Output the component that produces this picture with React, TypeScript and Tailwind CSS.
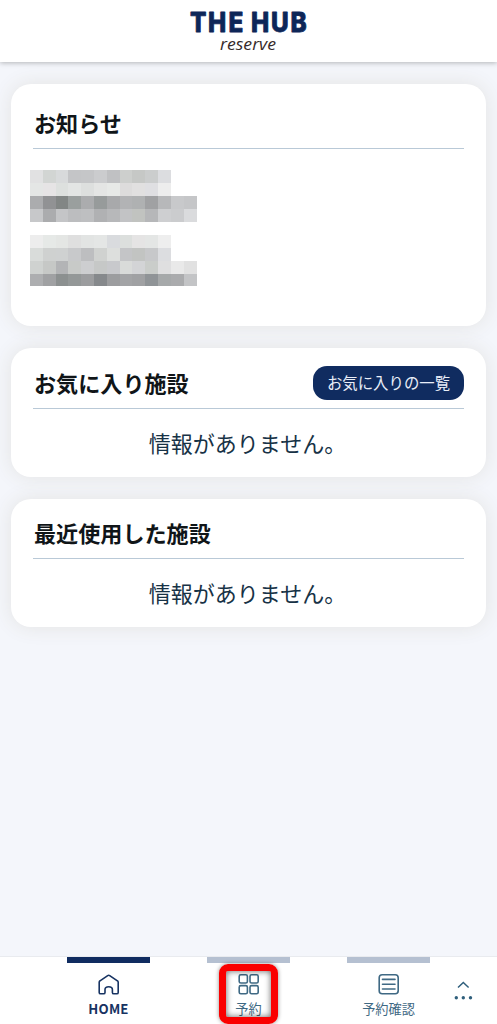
import type { ReactNode } from "react";
import clsx from "clsx";

const notices = [
  [
    ["#e1e1e2", "#d2d5d3", "#d8dadb", "#c4c5c7", "#c5c6c8", "#cbccce", "#c0c1c3", "#cdcfcd", "#c6c8c6", "#cbcdcd", "#dcdde0"],
    ["#e4e6e5", "#e6e4e5", "#dde0de", "#e3e5e4", "#dddfde", "#e4e5e4", "#e7e9e7", "#dddcdc", "#e1e0e0", "#dfdfe2", "#ededed"],
    ["#abacae", "#919294", "#828685", "#9a9f9e", "#abacae", "#979b9b", "#a8a9ab", "#b2b3b5", "#afb1b2", "#a0a1a3", "#b7b8ba", "#c8c9cb", "#c5c6c8"],
    ["#c7c8ca", "#abacae", "#c4c5c7", "#bcbdbf", "#bebfc1", "#b0b1b3", "#b7b8ba", "#c2c3c5", "#c1c3c0", "#b6b7b9", "#cecfd1", "#cbccce", "#dadbdd"],
  ],
  [
    ["#ededed", "#e6e9e7", "#e4e6e4", "#dfdfdf", "#e2e4e3", "#e4e6e5", "#d9dbde", "#dcdfdd", "#e5e4e4", "#e4e6e5", "#eeeeee"],
    ["#d9dcda", "#cfd1d0", "#cfd1d1", "#c8c9cb", "#bdbec0", "#d0d2d0", "#dddfdd", "#c4c5c7", "#c2c4c2", "#c7c8ca", "#dcdde0"],
    ["#cfd2d0", "#c6c8c6", "#b3b4b6", "#c8cac8", "#cdced0", "#c6c8c7", "#c8c9cc", "#d9dbd9", "#d3d4d6", "#cacdca", "#dfdfe0", "#e9e9e9", "#e1e1e1"],
    ["#adaeb0", "#a0a1a3", "#8c9090", "#949898", "#9c9d9f", "#86898c", "#9c9d9f", "#a3a4a6", "#a0a1a3", "#909497", "#a6a9aa", "#aaabad", "#c3c4c6"],
  ],
];

function Notice({ rows }: { rows: string[][] }) {
  return (
    <svg width="166.5" height="51.5" viewBox="0 0 13 4" preserveAspectRatio="none" shapeRendering="crispEdges">
      {rows.map((row, y) =>
        row.map((color, x) => <rect key={`${x}-${y}`} x={x} y={y} width="1" height="1" fill={color} />)
      )}
    </svg>
  );
}

function Card({ title, action, className, children }: { title: string; action?: ReactNode; className?: string; children: ReactNode }) {
  return (
    <section className={clsx("rounded-[20px] bg-white px-[22px] shadow-[0_0_20px_#e3e3e2]", className)}>
      <div className="flex h-[60px] items-end justify-between border-b border-[#b9c9d7] pb-2">
        <h2 className="pb-[2px] pl-px text-[22.1px] leading-8 font-bold text-[#101518]">{title}</h2>
        {action}
      </div>
      {children}
    </section>
  );
}

function Empty() {
  return <p className="pt-[17px] pr-[2px] text-center text-[22px] leading-8 text-[#173246]">情報がありません。</p>;
}

function HomeIcon() {
  return (
    <svg width="22" height="22" viewBox="0 0 22 22" fill="none" stroke="currentColor" strokeWidth="1.6" strokeLinejoin="round">
      <path d="M1.2 8.3Q1.2 7.3 2 6.8L9.7 1.6Q10.7 .9 11.7 1.6L19.4 6.8Q20.2 7.3 20.2 8.3V18.4Q20.2 19.8 18.8 19.8H15.8Q14.4 19.8 14.4 18.4V15.6Q14.4 12.8 10.7 12.8T7 15.6V18.4Q7 19.8 5.6 19.8H2.6Q1.2 19.8 1.2 18.4Z" />
    </svg>
  );
}

function GridIcon() {
  return (
    <svg width="22" height="22" viewBox="0 0 22 22" fill="none" stroke="currentColor" strokeWidth="1.6">
      <rect x="1.2" y="0.8" width="8.2" height="8.2" rx="1.6" />
      <rect x="12" y="0.8" width="8.2" height="8.2" rx="1.6" />
      <rect x="1.2" y="11.6" width="8.2" height="8.2" rx="1.6" />
      <rect x="12" y="11.6" width="8.2" height="8.2" rx="1.6" />
    </svg>
  );
}

function ListIcon() {
  return (
    <svg width="22" height="22" viewBox="0 0 22 22" fill="none" stroke="currentColor" strokeWidth="1.6" strokeLinecap="round">
      <rect x="1.2" y="0.8" width="19" height="19" rx="3" />
      <path d="M4.5 5.4H17M4.5 10.2H17M4.5 15H17" />
    </svg>
  );
}

const tabs = [
  { label: "HOME", icon: <HomeIcon />, active: true },
  { label: "予約", icon: <GridIcon />, marked: true },
  { label: "予約確認", icon: <ListIcon /> },
];

export default function App() {
  return (
    <div className="flex h-[1024px] w-[497px] flex-col overflow-hidden bg-[#f4f6fb] font-['Noto_Sans_CJK_JP',sans-serif]">
      <header className="z-10 flex h-[62px] shrink-0 justify-center bg-white shadow-[0_1px_5px_#00000045]">
        <svg width="131" height="62" viewBox="0 0 131 62">
          <text
            x="7.7 27.8 50.6 75.6 97.9 119.4"
            y="32.5"
            transform="scale(0.9 1)"
            fill="#0d2658"
            stroke="#0d2658"
            strokeWidth="0.8"
            strokeLinejoin="round"
            className="font-['Inter',sans-serif] text-[27px] font-extrabold"
          >
            THEHUB
          </text>
          <text x="37" y="50" textLength="56" lengthAdjust="spacingAndGlyphs" fill="#352a29" className="font-['Open_Sans',sans-serif] text-[17px] italic">
            reserve
          </text>
        </svg>
      </header>

      <main className="flex flex-1 flex-col gap-[22px] px-[11px] pt-[22px]">
        <Card title="お知らせ" className="h-[242px] pt-[5px]">
          <div className="-ml-[3px] flex flex-col gap-[13px] pt-[21px]">
            {notices.map((rows, i) => (
              <Notice key={i} rows={rows} />
            ))}
          </div>
        </Card>
        <Card
          title="お気に入り施設"
          className="h-[129px] pt-px"
          action={
            <button className="h-[34px] w-[151px] rounded-[14px] bg-[#102c60] text-[15.4px] whitespace-nowrap text-[#e9eef8]">
              お気に入りの一覧
            </button>
          }
        >
          <Empty />
        </Card>
        <Card title="最近使用した施設" className="h-[128px]">
          <Empty />
        </Card>
      </main>

      <nav className="flex h-[68px] shrink-0 border-t border-[#e9ebef] bg-white pl-[67px]">
        <div className="flex gap-[57px]">
          {tabs.map((tab) => (
            <a
              key={tab.label}
              className={clsx(
                "relative flex w-[83px] flex-col items-center border-t-[6px] pt-[11px]",
                tab.active ? "border-[#102c60] text-[#173362]" : "border-[#b5c0d1] text-[#3f6984]"
              )}
            >
              {tab.icon}
              <span className={clsx("pt-[3px] leading-5", tab.active ? "text-[13.2px] font-bold tracking-[0.2px]" : "text-[13.2px]")}>{tab.label}</span>
              {tab.marked && (
                <span className="absolute top-px left-3 h-[60px] w-[59px] rounded-[9px] border-[7px] border-[#fa0000] shadow-[0_0_4px_#00000070,inset_0_0_6px_#000000a0]" />
              )}
            </a>
          ))}
        </div>
        <button className="ml-[21px] self-start pt-[21px] text-[#2f5f7c]">
          <svg width="24" height="30" viewBox="0 0 24 30" fill="none" stroke="currentColor" strokeWidth="1.5">
            <path d="M7 9.5L12.3 4.5L17.6 9.5" />
            <g fill="currentColor" stroke="none">
              <circle cx="5.3" cy="19.7" r="1.7" />
              <circle cx="12.3" cy="19.7" r="1.7" />
              <circle cx="19.5" cy="19.7" r="1.7" />
            </g>
          </svg>
        </button>
      </nav>
    </div>
  );
}
